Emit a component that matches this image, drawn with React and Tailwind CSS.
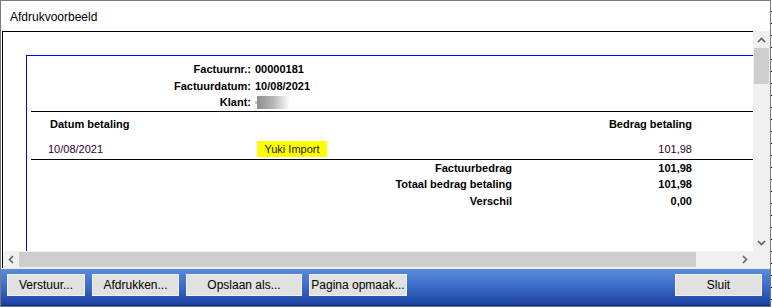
import React from "react";

const ChevronUp = () => (
  <svg width="9" height="6" viewBox="0 0 9 6">
    <path d="M1 5 L4.5 1.5 L8 5" fill="none" stroke="#606060" strokeWidth="1.6" />
  </svg>
);

const ChevronDown = () => (
  <svg width="9" height="6" viewBox="0 0 9 6">
    <path d="M1 1 L4.5 4.5 L8 1" fill="none" stroke="#606060" strokeWidth="1.6" />
  </svg>
);

const ChevronLeft = () => (
  <svg width="6" height="9" viewBox="0 0 6 9">
    <path d="M5 1 L1.5 4.5 L5 8" fill="none" stroke="#606060" strokeWidth="1.6" />
  </svg>
);

const ChevronRight = () => (
  <svg width="6" height="9" viewBox="0 0 6 9">
    <path d="M1 1 L4.5 4.5 L1 8" fill="none" stroke="#606060" strokeWidth="1.6" />
  </svg>
);

function Button({ label, width }) {
  return (
    <button
      className={`h-[22px] ${width} border border-[#f2f2f2] bg-[#e1e1e1] text-[12px] leading-[20px] text-black`}
    >
      {label}
    </button>
  );
}

export default function App() {
  const header = [
    { label: "Factuurnr.:", value: "00000181", h: "h-[17px]" },
    { label: "Factuurdatum:", value: "10/08/2021", h: "h-[16px]" },
    { label: "Klant:", value: null, h: "h-[17px]" },
  ];

  const totals = [
    { label: "Factuurbedrag", value: "101,98", h: "h-[16px]" },
    { label: "Totaal bedrag betaling", value: "101,98", h: "h-[17px]" },
    { label: "Verschil", value: "0,00", h: "h-[16px]" },
  ];

  return (
    <div className="flex h-[307px] w-[772px] bg-white font-['Liberation_Sans',Arial,sans-serif] text-black">
      <div className="flex h-[307px] w-[771px] flex-col border border-[#7a7a7a] bg-white">
        {/* titel */}
        <div className="flex h-[30px] items-center pl-[9px] pt-[2px] text-[12px]">
          Afdrukvoorbeeld
        </div>

        {/* voorbeeld */}
        <div className="ml-[1px] flex flex-col border-l border-black">
          <div className="flex h-[220px]">
            <div className="w-[750px] overflow-hidden border-t border-black bg-white pl-[23px] pt-[23px]">
              <div className="h-full border-l border-t border-[#0000ff]">
                <div className="pt-[5px] text-[11px] font-bold">
                  {header.map((row) => (
                    <div key={row.label} className={`flex items-center ${row.h}`}>
                      <div className="w-[224px] text-right">{row.label}</div>
                      <div className="ml-[4px] flex items-center">
                        {row.value ? (
                          row.value
                        ) : (
                          <>
                            <div className="h-[3px] w-[2px] bg-[#f0c080]" />
                            <div className="h-[13px] w-[33px] bg-linear-to-r from-[#8e8e8e] via-[#b8b8b8] to-white" />
                          </>
                        )}
                      </div>
                    </div>
                  ))}
                </div>
                <div className="ml-[4px] h-px bg-black" />

                <div className="mt-[4px] flex h-[16px] w-[665px] items-center justify-between text-[11px] font-bold">
                  <div className="pl-[23px]">Datum betaling</div>
                  <div>Bedrag betaling</div>
                </div>

                <div className="mt-[9px] flex h-[16px] w-[665px] items-center text-[11px] text-[#2e0030]">
                  <div className="w-[230px] pl-[21px]">10/08/2021</div>
                  <div className="flex h-[16px] w-[70px] items-center justify-center bg-[#ffff00] text-[#1a1a00]">
                    Yuki Import
                  </div>
                  <div className="flex-1 text-right">101,98</div>
                </div>
                <div className="ml-[4px] mt-[2px] h-px bg-black" />

                <div className="text-[11px] font-bold">
                  {totals.map((row) => (
                    <div key={row.label} className={`flex items-center ${row.h}`}>
                      <div className="w-[485px] text-right">{row.label}</div>
                      <div className="w-[180px] text-right">{row.value}</div>
                    </div>
                  ))}
                </div>
              </div>
            </div>

            {/* verticale schuifbalk */}
            <div className="flex w-[17px] flex-col bg-[#f0f0f0]">
              <div className="flex h-[17px] items-center justify-center">
                <ChevronUp />
              </div>
              <div className="mx-[1px] h-[36px] bg-[#cdcdcd]" />
              <div className="flex-1" />
              <div className="flex h-[17px] items-center justify-center">
                <ChevronDown />
              </div>
            </div>
          </div>

          {/* horizontale schuifbalk */}
          <div className="flex h-[17px] bg-[#f0f0f0]">
            <div className="flex w-[16px] items-center justify-center">
              <ChevronLeft />
            </div>
            <div className="my-[1px] w-[677px] bg-[#cdcdcd]" />
            <div className="flex-1" />
            <div className="flex w-[17px] items-center justify-center">
              <ChevronRight />
            </div>
            <div className="w-[17px]" />
          </div>
        </div>

        {/* knoppen */}
        <div className="flex h-[38px] items-start gap-[7px] border-t border-b border-t-[#e8eefa] border-b-[#0d2a7e] bg-linear-to-b from-[#5a8bdb] via-[#3b6ac6] to-[#1c42a3] pl-[6px] pr-[8px] pt-[5px]">
          <Button label="Verstuur..." width="w-[78px]" />
          <Button label="Afdrukken..." width="w-[87px]" />
          <Button label="Opslaan als..." width="w-[116px]" />
          <Button label="Pagina opmaak..." width="w-[98px]" />
          <div className="flex-1" />
          <Button label="Sluit" width="w-[87px]" />
        </div>
      </div>
      <div className="h-[307px] w-px bg-[repeating-linear-gradient(to_bottom,#ffffff_0px,#ffffff_11px,#000000_11px,#000000_12px)]" />
    </div>
  );
}
